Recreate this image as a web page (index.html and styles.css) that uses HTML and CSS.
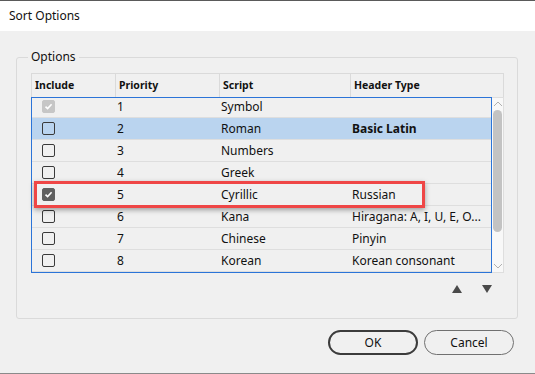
FILE: index.html
```html
<!DOCTYPE html>
<html lang="en">
<head>
  <meta charset="UTF-8" />
  <title>Sort Options</title>
  <link rel="stylesheet" href="styles.css">
</head>
<body>
  <div class="window">
    <div class="titlebar">Sort Options</div>

    <fieldset class="group">
      <legend>Options</legend>

      <div class="table">
        <div class="thead">
          <div class="th">Include</div>
          <div class="th">Priority</div>
          <div class="th">Script</div>
          <div class="th">Header Type</div>
        </div>

        <div class="tbody">
          <div class="list">
            <div class="rows">
              <div class="row">
                <div class="cell check"><span class="box disabled">
                  <svg width="9" height="9" viewBox="0 0 9 9"><path d="M1.5 4.6 L3.6 6.6 L7.6 2.2" fill="none" stroke="#fff" stroke-width="1.6"/></svg>
                </span></div>
                <div class="cell">1</div>
                <div class="cell">Symbol</div>
                <div class="cell"></div>
              </div>
              <div class="row selected">
                <div class="cell check"><span class="box"></span></div>
                <div class="cell">2</div>
                <div class="cell">Roman</div>
                <div class="cell bold">Basic Latin</div>
              </div>
              <div class="row">
                <div class="cell check"><span class="box"></span></div>
                <div class="cell">3</div>
                <div class="cell">Numbers</div>
                <div class="cell"></div>
              </div>
              <div class="row">
                <div class="cell check"><span class="box"></span></div>
                <div class="cell">4</div>
                <div class="cell">Greek</div>
                <div class="cell"></div>
              </div>
              <div class="row">
                <div class="cell check"><span class="box checked">
                  <svg width="9" height="9" viewBox="0 0 9 9"><path d="M1.5 4.6 L3.6 6.6 L7.6 2.2" fill="none" stroke="#fff" stroke-width="1.6"/></svg>
                </span></div>
                <div class="cell">5</div>
                <div class="cell">Cyrillic</div>
                <div class="cell">Russian</div>
              </div>
              <div class="row">
                <div class="cell check"><span class="box"></span></div>
                <div class="cell">6</div>
                <div class="cell">Kana</div>
                <div class="cell">Hiragana: A, I, U, E, O...</div>
              </div>
              <div class="row">
                <div class="cell check"><span class="box"></span></div>
                <div class="cell">7</div>
                <div class="cell">Chinese</div>
                <div class="cell">Pinyin</div>
              </div>
              <div class="row">
                <div class="cell check"><span class="box"></span></div>
                <div class="cell">8</div>
                <div class="cell">Korean</div>
                <div class="cell">Korean consonant</div>
              </div>
            </div>
          </div>

          <div class="scrollbar">
            <svg class="chev" width="10" height="6" viewBox="0 0 10 6"><path d="M1 5 L5 1 L9 5" fill="none" stroke="#b0b0b0" stroke-width="1"/></svg>
            <div class="thumb"></div>
            <svg class="chev" width="10" height="6" viewBox="0 0 10 6"><path d="M1 1 L5 5 L9 1" fill="none" stroke="#b0b0b0" stroke-width="1"/></svg>
          </div>
        </div>
      </div>

      <div class="movers">
        <svg width="10" height="8" viewBox="0 0 10 8"><polygon points="5,0 10,8 0,8" fill="#4a4a4a"/></svg>
        <svg width="10" height="8" viewBox="0 0 10 8"><polygon points="0,0 10,0 5,8" fill="#4a4a4a"/></svg>
      </div>
    </fieldset>

    <div class="buttons">
      <button class="btn default">OK</button>
      <button class="btn">Cancel</button>
    </div>

    <div class="callout"></div>
  </div>
</body>
</html>
```

FILE: styles.css
```css
* {
  box-sizing: border-box;
}

body {
  margin: 0;
  padding: 0;
  font-family: "Noto Sans", "Open Sans", sans-serif;
  font-size: 12px;
  color: #111;
}

.window {
  position: relative;
  width: 535px;
  height: 374px;
  background: #f0f0f0;
  border-top: 1px solid #5a5a5a;
  border-bottom: 1px solid #8a8a8a;
  overflow: hidden;
}

.titlebar {
  height: 30px;
  background: #fff;
  padding-left: 9px;
  line-height: 29px;
  font-size: 12px;
}

.group {
  margin: 18px 17px 0 16px;
  padding: 8px 13px 25px 14px;
  border: 1px solid #dadada;
  border-radius: 3px;
  min-width: 0;
}

.group legend {
  margin-left: -3px;
  padding: 0 3px;
  line-height: 16px;
  font-size: 12px;
}

.table {
  width: 473px;
}

.thead {
  display: grid;
  grid-template-columns: 84px 104px 131px 153px;
  height: 24px;
  border-top: 1px solid #dadada;
  border-left: 1px solid #dadada;
}

.th {
  border-right: 1px solid #dadada;
  padding-left: 3px;
  font-weight: bold;
  font-size: 10.5px;
  line-height: 22px;
}

.tbody {
  display: flex;
  height: 176px;
}

.list {
  width: 461px;
  border: 1px solid #2b74d8;
  overflow: hidden;
}

.rows {
  margin-top: -2px;
}

.row {
  display: grid;
  grid-template-columns: 83px 104px 131px 141px;
  height: 22px;
  border-bottom: 1px solid #dedede;
  align-items: center;
}

.row.selected {
  background: #bad4ef;
}

.cell {
  padding-left: 2px;
  white-space: nowrap;
  line-height: 21px;
}

.cell.check {
  padding-left: 10px;
  display: flex;
  align-items: center;
}

.cell.bold {
  font-weight: bold;
}

.box {
  width: 13px;
  height: 13px;
  border: 1px solid #3a3a3a;
  border-radius: 2px;
  display: flex;
  align-items: center;
  justify-content: center;
}

.box.checked {
  background: #606060;
  border-color: #606060;
}

.box.disabled {
  background: #c6c6c6;
  border-color: #c6c6c6;
}

.scrollbar {
  width: 12px;
  background: #f8f8f8;
  border: 1px solid #dedede;
  border-left: none;
  display: flex;
  flex-direction: column;
  align-items: center;
  padding: 3px 0;
}

.chev {
  display: block;
  flex: none;
}

.thumb {
  width: 9px;
  height: 122px;
  margin: 3px 0 auto;
  background: #c3c3c3;
  border-radius: 5px;
}

.movers {
  display: flex;
  justify-content: flex-end;
  gap: 20px;
  margin-top: 12px;
  padding-right: 12px;
}

.movers svg {
  display: block;
}

.buttons {
  display: flex;
  justify-content: flex-end;
  gap: 6px;
  margin-top: 11px;
  padding-right: 21px;
}

.btn {
  width: 90px;
  height: 25px;
  border: 1px solid #707070;
  border-radius: 13px;
  background: #f0f0f0;
  font-family: "Noto Sans", "Open Sans", sans-serif;
  font-size: 12px;
  color: #111;
  padding: 0;
}

.btn.default {
  border: 2px solid #3c3c3c;
}

.callout {
  position: absolute;
  left: 34px;
  top: 180px;
  width: 391px;
  height: 27px;
  border: 3px solid #ef4646;
  box-shadow: 0 2px 5px rgba(0, 0, 0, 0.35);
}
```
